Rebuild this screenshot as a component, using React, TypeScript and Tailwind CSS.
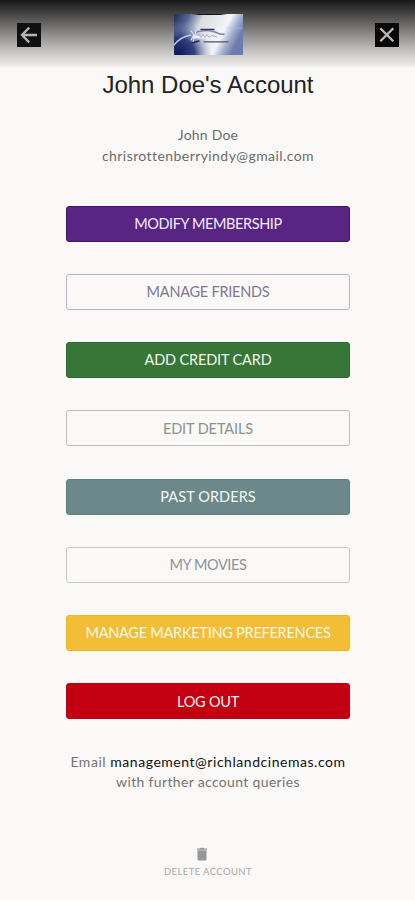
import { clsx } from "clsx";

type AccountAction = {
  label: string;
  className: string;
};

const ACTIONS: AccountAction[] = [
  { label: "MODIFY MEMBERSHIP", className: "border-[#431078] bg-[#582584] text-[#f3ecfa] tracking-[-0.4px]" },
  { label: "MANAGE FRIENDS", className: "border-[#b9b6c3] text-[#7d7790] tracking-[-0.25px]" },
  { label: "ADD CREDIT CARD", className: "border-[#2a6f29] bg-[#377637] text-[#eff8ee] tracking-[-0.15px]" },
  { label: "EDIT DETAILS", className: "border-[#bcc1bb] text-[#89938a] tracking-[-0.1px]" },
  { label: "PAST ORDERS", className: "border-[#5f8080] bg-[#6d888a] text-[#f2f7f7] tracking-[0.1px]" },
  { label: "MY MOVIES", className: "border-[#c6c9c9] text-[#8c9296] tracking-[-0.4px]" },
  { label: "MANAGE MARKETING PREFERENCES", className: "border-[#edb81f] bg-[#f2bd37] text-[#fffae6] tracking-[-0.25px]" },
  { label: "LOG OUT", className: "border-[#bd0010] bg-[#c20012] text-[#fff0ee] tracking-[-0.25px]" },
];

function BackIcon() {
  return (
    <svg viewBox="0 0 24 24" className="size-6" fill="none" stroke="#b5b5b5" strokeWidth="2.3">
      <path d="M20 12H5.5M12.2 4.6 5 12l7.2 7.4" />
    </svg>
  );
}

function CloseIcon() {
  return (
    <svg viewBox="0 0 24 24" className="size-6" fill="none" stroke="#bcbcbc" strokeWidth="2.3">
      <path d="m5.3 5.3 13 13M18.3 5.3l-13 13" />
    </svg>
  );
}

function CinemaLogo() {
  return (
    <svg viewBox="0 0 69 41" className="h-[41px] w-[69px]">
      <defs>
        <linearGradient id="sky" x1="0" y1="0.1" x2="1" y2="0.4">
          <stop offset="0" stopColor="#26345f" />
          <stop offset="0.18" stopColor="#56658d" />
          <stop offset="0.38" stopColor="#d9dbe0" />
          <stop offset="0.75" stopColor="#f4f5f8" />
          <stop offset="0.88" stopColor="#a2add0" />
          <stop offset="1" stopColor="#6d7cad" />
        </linearGradient>
        <radialGradient id="shade" gradientUnits="userSpaceOnUse" cx="4" cy="41" r="34">
          <stop offset="0" stopColor="#0c1658" />
          <stop offset="0.5" stopColor="#22316f" stopOpacity="0.9" />
          <stop offset="1" stopColor="#8d9ac5" stopOpacity="0" />
        </radialGradient>
        <filter id="soft" x="-20%" y="-50%" width="140%" height="200%">
          <feGaussianBlur stdDeviation="0.6" />
        </filter>
      </defs>
      <rect width="69" height="41" fill="url(#sky)" />
      <rect width="69" height="41" fill="url(#shade)" />
      <path d="M18 0h35l-7 1H25z" fill="#111318" />
      <g filter="url(#soft)" fill="none" strokeLinecap="round">
        <path d="M0 31C5 25 10 22 17 21" stroke="#b9c9f0" strokeWidth="1.3" />
        <path d="M18 20c8-4 16-4 23-2 4 2 6 3 9 2" stroke="#7380ae" strokeWidth="1.4" />
        <path d="M20 23h26" stroke="#eef1fb" strokeWidth="3" />
        <path d="M25 20.5l2 3 2-3 2 3 2-3 2 3 3-2 5 1.5" stroke="#8893bb" strokeWidth="0.7" />
        <path d="M27 15.5h13" stroke="#33394f" strokeWidth="1.5" />
        <path d="M17 17l3 4-3 5M22 17l-3 11" stroke="#e2e8f8" strokeWidth="1.1" />
        <path d="M18 29l7-2" stroke="#1d2957" strokeWidth="1.4" />
        <path d="M30 27.8h24" stroke="#4c5368" strokeWidth="1.3" />
        <path d="M52 14h17" stroke="#b6c4e8" strokeWidth="0.6" />
      </g>
    </svg>
  );
}

function TrashIcon() {
  return (
    <svg viewBox="0 0 12 14" className="h-[14px] w-3" fill="#979797">
      <path d="M1 1.5h2.8l.6-.7h3.2l.6.7H11v1.2H1z" />
      <path d="M1.5 3.3h9v8.9c0 .8-.5 1.3-1.3 1.3H2.8c-.8 0-1.3-.5-1.3-1.3z" />
    </svg>
  );
}

export default function App() {
  return (
    <main className="flex h-[900px] w-[415px] flex-col items-center overflow-hidden bg-[#faf9f8] pl-px font-[Lato,sans-serif]">
      <header className="-ml-px flex h-[68px] w-[415px] shrink-0 items-start justify-between bg-[linear-gradient(to_bottom,#181818_0%,#242424_6%,#504f4f_25%,#8b8a88_50%,#c4c3c1_75%,#eae9e7_96%,#faf9f8_100%)] pr-4 pl-[17px]">
        <button type="button" aria-label="Back" className="mt-[23px] flex size-6 items-center justify-center bg-[#101010]">
          <BackIcon />
        </button>
        <div className="mt-[14px] ml-px">
          <CinemaLogo />
        </div>
        <button type="button" aria-label="Close" className="mt-[23px] flex size-6 items-center justify-center bg-[#080808]">
          <CloseIcon />
        </button>
      </header>

      <h1 className="mt-px h-8 font-['Liberation_Sans',sans-serif] text-[24px] leading-8 tracking-[-0.02px] text-[#222]">
        John Doe's Account
      </h1>

      <div className="mt-6 text-center text-[14px] leading-[20.5px] text-[#6c6c6c]">
        <p className="tracking-[0.2px]">John Doe</p>
        <p className="tracking-[0.43px]">chrisrottenberryindy@gmail.com</p>
      </div>

      <div className="mt-[39.6px] flex w-[284px] flex-col gap-[32.27px]">
        {ACTIONS.map(({ label, className }) => (
          <button
            key={label}
            type="button"
            className={clsx(
              "flex h-9 shrink-0 items-center justify-center rounded-[3px] border text-[14.5px] whitespace-nowrap",
              className,
            )}
          >
            {label}
          </button>
        ))}
      </div>

      <div className="mt-[32.2px] text-center text-[14px] leading-[20.5px] text-[#747474]">
        <p className="tracking-[0.54px]">
          Email <span className="text-[#111]">management@richlandcinemas.com</span>
        </p>
        <p className="tracking-[0.34px]">with further account queries</p>
      </div>

      <button type="button" className="mt-[54px] flex flex-col items-center text-[9.5px] leading-4 tracking-[0.4px] text-[#a8a8a8]">
        <span className="mr-3 mb-[3px]">
          <TrashIcon />
        </span>
        DELETE ACCOUNT
      </button>
    </main>
  );
}
